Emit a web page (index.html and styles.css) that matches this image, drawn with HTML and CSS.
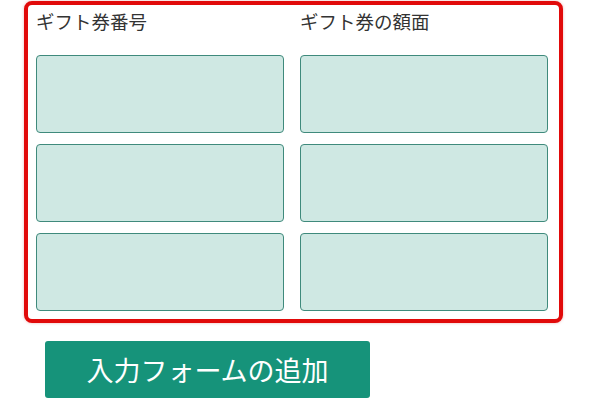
FILE: index.html
```html
<!DOCTYPE html>
<html lang="ja">
<head>
<meta charset="utf-8">
<title>ギフト券入力</title>
<link rel="stylesheet" href="styles.css">
</head>
<body>
<div class="page">
  <div class="frame">
    <div class="grid">
      <div class="label">ギフト券番号</div>
      <div class="label">ギフト券の額面</div>
      <div class="field"></div>
      <div class="field"></div>
      <div class="field"></div>
      <div class="field"></div>
      <div class="field"></div>
      <div class="field"></div>
    </div>
  </div>
  <button class="add-btn" type="button">入力フォームの追加</button>
</div>
</body>
</html>
```
FILE: styles.css
```css
html, body {
  margin: 0;
  padding: 0;
  background: #ffffff;
}
body {
  font-family: "Noto Sans CJK JP", "Noto Sans", sans-serif;
  color: #333333;
}
.page {
  display: flex;
  flex-direction: column;
  align-items: flex-start;
  padding-top: 1px;
}
.frame {
  margin-left: 24px;
  width: 539px;
  height: 322px;
  box-sizing: border-box;
  border: 4px solid #e10a0a;
  border-radius: 8px;
  box-shadow: 0 0 3px rgba(200, 40, 40, 0.35);
  padding: 4px 11px 8px 8px;
  background: #ffffff;
}
.grid {
  display: grid;
  grid-template-columns: 248px 248px;
  column-gap: 16px;
  row-gap: 11px;
}
.label {
  font-size: 18.5px;
  line-height: 24px;
  color: #333333;
  margin-bottom: 11px;
}
.field {
  height: 78px;
  box-sizing: border-box;
  background: #cfe8e3;
  border: 1.5px solid #3f8a7c;
  border-radius: 4px;
}
.add-btn {
  margin: 18px 0 0 45px;
  width: 325px;
  height: 57px;
  padding: 0;
  border: none;
  border-radius: 3px;
  background: #16937a;
  color: #ffffff;
  font-family: "Noto Sans CJK JP", "Noto Sans", sans-serif;
  font-size: 27px;
  line-height: 57px;
  text-align: center;
}
```
